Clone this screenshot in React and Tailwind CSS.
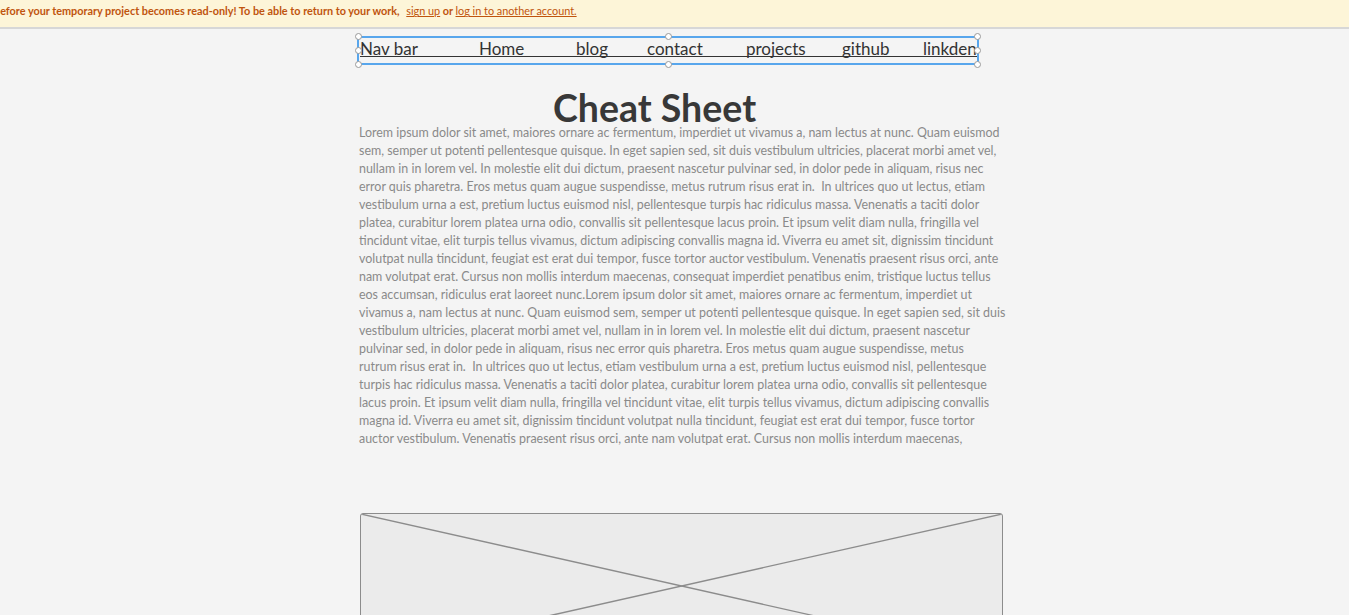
import React from 'react';

const lines = [
  'Lorem ipsum dolor sit amet, maiores ornare ac fermentum, imperdiet ut vivamus a, nam lectus at nunc. Quam euismod',
  'sem, semper ut potenti pellentesque quisque. In eget sapien sed, sit duis vestibulum ultricies, placerat morbi amet vel,',
  'nullam in in lorem vel. In molestie elit dui dictum, praesent nascetur pulvinar sed, in dolor pede in aliquam, risus nec',
  'error quis pharetra. Eros metus quam augue suspendisse, metus rutrum risus erat in.\u00a0 In ultrices quo ut lectus, etiam',
  'vestibulum urna a est, pretium luctus euismod nisl, pellentesque turpis hac ridiculus massa. Venenatis a taciti dolor',
  'platea, curabitur lorem platea urna odio, convallis sit pellentesque lacus proin. Et ipsum velit diam nulla, fringilla vel',
  'tincidunt vitae, elit turpis tellus vivamus, dictum adipiscing convallis magna id. Viverra eu amet sit, dignissim tincidunt',
  'volutpat nulla tincidunt, feugiat est erat dui tempor, fusce tortor auctor vestibulum. Venenatis praesent risus orci, ante',
  'nam volutpat erat. Cursus non mollis interdum maecenas, consequat imperdiet penatibus enim, tristique luctus tellus',
  'eos accumsan, ridiculus erat laoreet nunc.Lorem ipsum dolor sit amet, maiores ornare ac fermentum, imperdiet ut',
  'vivamus a, nam lectus at nunc. Quam euismod sem, semper ut potenti pellentesque quisque. In eget sapien sed, sit duis',
  'vestibulum ultricies, placerat morbi amet vel, nullam in in lorem vel. In molestie elit dui dictum, praesent nascetur',
  'pulvinar sed, in dolor pede in aliquam, risus nec error quis pharetra. Eros metus quam augue suspendisse, metus',
  'rutrum risus erat in.\u00a0 In ultrices quo ut lectus, etiam vestibulum urna a est, pretium luctus euismod nisl, pellentesque',
  'turpis hac ridiculus massa. Venenatis a taciti dolor platea, curabitur lorem platea urna odio, convallis sit pellentesque',
  'lacus proin. Et ipsum velit diam nulla, fringilla vel tincidunt vitae, elit turpis tellus vivamus, dictum adipiscing convallis',
  'magna id. Viverra eu amet sit, dignissim tincidunt volutpat nulla tincidunt, feugiat est erat dui tempor, fusce tortor',
  'auctor vestibulum. Venenatis praesent risus orci, ante nam volutpat erat. Cursus non mollis interdum maecenas,',
];

const navItems = [
  { label: 'Nav bar', w: 'w-[119px]' },
  { label: 'Home', w: 'w-[97px]' },
  { label: 'blog', w: 'w-[71px]' },
  { label: 'contact', w: 'w-[99px]' },
  { label: 'projects', w: 'w-[96px]' },
  { label: 'github', w: 'w-[81px]' },
  { label: 'linkden', w: '' },
];

// little selection handle on the nav box
function Handle({ className }) {
  return (
    <span className={'absolute w-[7px] h-[7px] rounded-full bg-white border border-[#9a9a9a] ' + className} />
  );
}

export default function App() {
  return (
    <div className="min-h-screen bg-[#f4f4f4] overflow-hidden font-['Lato',sans-serif]">
      {/* banner */}
      <div className="h-[29px] bg-[#fdf5d8] border-b-[2px] border-[#d7d7d7] flex items-center overflow-hidden">
        <p className="ml-[-6px] whitespace-nowrap text-[10.85px] font-bold text-[#c0540e] pb-[4px]">
          before your temporary project becomes read-only! To be able to return to your work,{' '}
          <span className="ml-[4px] font-normal underline">sign up</span> or{' '}
          <span className="font-normal underline">log in to another account.</span>
        </p>
      </div>

      <div className="ml-[357px] w-[646px] flex flex-col items-start">
        {/* nav bar */}
        <div className="relative mt-[7px] w-[622px] h-[29px] border-[2px] border-[#58a6ec]">
          <Handle className="left-[-4px] top-[-5px]" />
          <Handle className="left-[306px] top-[-5px]" />
          <Handle className="right-[-4px] top-[-5px]" />
          <Handle className="left-[-4px] top-[9px]" />
          <Handle className="right-[-4px] top-[9px]" />
          <Handle className="left-[-4px] bottom-[-5px]" />
          <Handle className="left-[306px] bottom-[-5px]" />
          <Handle className="right-[-4px] bottom-[-5px]" />
          <div className="flex items-end h-[19px] ml-[1px] border-b border-[#333]">
            {navItems.map((it) => (
              <span key={it.label} className={'text-[17px] leading-[14px] text-[#333] whitespace-nowrap ' + it.w}>
                {it.label}
              </span>
            ))}
          </div>
        </div>

        {/* heading */}
        <h1 className="mt-[24px] ml-[196px] text-[37.5px] leading-[38px] font-bold text-[#383838]">Cheat Sheet</h1>

        {/* body text */}
        <p className="mt-[-3px] ml-[2px] text-[12.45px] leading-[18px] text-[#8a8a8a] whitespace-nowrap">
          {lines.map((l, i) => (
            <React.Fragment key={i}>
              {l}
              <br />
            </React.Fragment>
          ))}
        </p>

        {/* image placeholder */}
        <div className="mt-[65px] ml-[3px] w-[643px] h-[146px] bg-[#ebebeb] border border-[#8c8c8c] rounded-[3px] overflow-hidden">
          <svg width="100%" height="100%" viewBox="0 0 641 144" preserveAspectRatio="none">
            <line x1="0" y1="0" x2="641" y2="144" stroke="#8c8c8c" strokeWidth="1.3" />
            <line x1="641" y1="0" x2="0" y2="144" stroke="#8c8c8c" strokeWidth="1.3" />
          </svg>
        </div>
      </div>
    </div>
  );
}
